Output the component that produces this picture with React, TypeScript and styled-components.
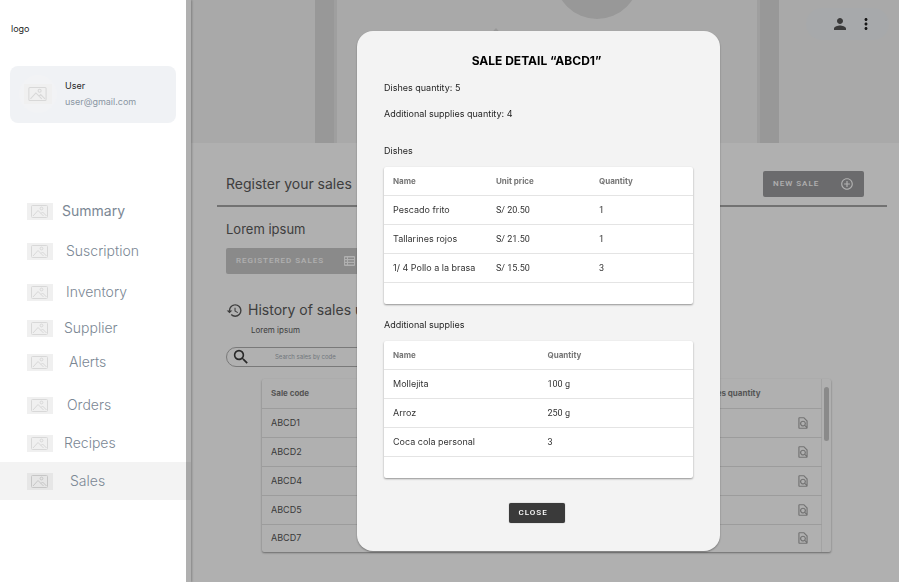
import React from "react";
import styled, { createGlobalStyle } from "styled-components";
import {
  MdPerson,
  MdMoreVert,
  MdAddCircleOutline,
  MdHistory,
  MdSearch,
  MdOutlineFindInPage,
} from "react-icons/md";

const GlobalStyle = createGlobalStyle`
  *, *::before, *::after { box-sizing: border-box; }
  body {
    margin: 0;
    background: #fff;
    color: #1f1f1f;
    font-family: Inter, "Liberation Sans", sans-serif;
    font-size: 9px;
    line-height: 12px;
  }
  h1, h2, h3, p { margin: 0; font-weight: 400; }
  button, input { font: inherit; }
  svg { display: block; flex: none; }
`;

const Page = styled.div`
  display: flex;
  min-height: 100vh;
`;

/* ---------- Sidebar ---------- */

const Sidebar = styled.aside`
  width: 191px;
  flex: none;
  background: #fff;
  box-shadow: 1px 0 2px rgba(0, 0, 0, 0.25);
  z-index: 1;
`;

const Logo = styled.p`
  padding: 23px 11px 0;
  height: 66px;
`;

const UserCard = styled.section`
  display: flex;
  align-items: center;
  gap: 8px;
  height: 57px;
  margin: 0 15px 0 10px;
  padding: 0 0 2px 9px;
  border-radius: 8px;
  background: #f0f2f5;
`;

const Avatar = styled.div`
  display: grid;
  place-items: center;
  width: 38px;
  height: 38px;
  border-radius: 50%;
  background: #f2f3f5;
`;

const UserEmail = styled.p`
  margin-top: 4px;
  color: #8a96a3;
`;

const UserName = styled.h2`
  font-size: 9px;
  line-height: 12px;
`;

const Nav = styled.nav`
  display: flex;
  flex-direction: column;
  padding-top: 69px;
`;

const NavLink = styled.a<{
  $gap: number;
  $height: number;
  $indent: number;
  $active?: boolean;
  $medium?: boolean;
}>`
  display: flex;
  align-items: center;
  gap: ${(p) => p.$indent}px;
  height: ${(p) => p.$height}px;
  margin-top: ${(p) => p.$gap}px;
  padding-left: 27px;
  background: ${(p) => (p.$active ? "#f3f3f3" : "transparent")};
  color: #7b8794;
  font-size: 14px;
  font-weight: ${(p) => (p.$medium ? 400 : 300)};
  line-height: 20px;
  text-decoration: none;
`;

const PictureSvg = styled.svg<{ $strong?: boolean }>`
  color: ${(p) => (p.$strong ? "#c6c6c6" : "#d8d8d8")};
  background: ${(p) => (p.$strong ? "#e6e6e6" : "#f0f0f0")};
`;

function Picture({ strong, width = 26, height = 17 }: { strong?: boolean; width?: number; height?: number }) {
  return (
    <PictureSvg $strong={strong} width={width} height={height} viewBox="0 0 26 17" fill="none" stroke="currentColor" aria-hidden="true">
      <rect x="4.5" y="2.5" width="16" height="12" rx="1" />
      <circle cx="14.5" cy="5.5" r="1.4" />
      <path d="M6 13l5-5.500 5.500 5.500M14 10.500l1.500-1.500 4 4" />
    </PictureSvg>
  );
}

const navItems = [
  { label: "Summary", gap: 0, height: 38, indent: 9, medium: true },
  { label: "Suscription", gap: 2, height: 38, indent: 13 },
  { label: "Inventory", gap: 4, height: 36, indent: 13 },
  { label: "Supplier", gap: 0, height: 36, indent: 11 },
  { label: "Alerts", gap: 0, height: 32, indent: 16 },
  { label: "Orders", gap: 8, height: 38, indent: 14 },
  { label: "Recipes", gap: 0, height: 38, indent: 11 },
  { label: "Sales", gap: 0, height: 38, indent: 17, active: true },
];

/* ---------- Main page ---------- */

const Main = styled.main`
  flex: 1;
  min-width: 0;
`;

const Banner = styled.header`
  display: grid;
  height: 143px;
  overflow: hidden;
  background: #f5f5f5;
  & > * { grid-area: 1 / 1; }
`;

const BannerArt = styled.svg`
  width: 100%;
  height: 143px;
`;

const AccountBar = styled.div`
  display: flex;
  align-items: center;
  justify-content: flex-end;
  justify-self: end;
  gap: 8px;
  width: 83px;
  height: 32px;
  margin: 8px 10px 0 0;
  padding-right: 14px;
  border-radius: 16px;
  background: #f2f5f8;
`;

const IconButton = styled.button<{ $color?: string }>`
  display: grid;
  place-items: center;
  padding: 0;
  border: 0;
  background: none;
  color: ${(p) => p.$color ?? "#555"};
`;

const TitleBar = styled.div`
  display: flex;
  align-items: center;
  justify-content: space-between;
  margin: 0 12px 0 26px;
  padding: 28px 23px 8px 9px;
  border-bottom: 2px solid #a6a6a6;
`;

const Title = styled.h1`
  color: #5a5a5a;
  font-size: 14px;
  line-height: 20px;
`;

const ActionButton = styled.button<{ $bg: string; $width: number }>`
  display: flex;
  align-items: center;
  justify-content: space-between;
  width: ${(p) => p.$width}px;
  height: 26px;
  padding: 0 10px;
  border: 0;
  border-radius: 2px;
  background: ${(p) => p.$bg};
  color: #fff;
  font-family: Roboto, sans-serif;
  font-size: 8px;
  font-weight: 500;
  letter-spacing: 1px;
`;

const Body = styled.div`
  padding: 12px 68px 30px 35px;
`;

const Subtitle = styled.h2`
  margin-bottom: 9px;
  color: #5a5a5a;
  font-size: 13px;
  line-height: 20px;
`;

const HistoryTitle = styled.h2`
  display: flex;
  align-items: center;
  gap: 5px;
  margin-top: 26px;
  color: #5a5a5a;
  font-size: 14px;
  line-height: 20px;
`;

const HistoryNote = styled.p`
  margin: 4px 0 11px 25px;
  color: #5a5a5a;
  font-size: 8px;
`;

const SearchBox = styled.label`
  display: flex;
  align-items: center;
  gap: 26px;
  width: 260px;
  height: 20px;
  padding-left: 6px;
  border: 1px solid #b0b0b0;
  border-radius: 10px;
  color: #3a3a3a;
`;

const SearchInput = styled.input`
  flex: 1;
  min-width: 0;
  padding: 0;
  border: 0;
  outline: 0;
  background: none;
  font-size: 6px;
  line-height: 12px;
  &::placeholder { color: #a5adb5; opacity: 1; }
`;

const SalesPanel = styled.div`
  display: flex;
  margin: 12px 0 0 36px;
  border-radius: 2px;
  box-shadow: 0 1px 2px rgba(0, 0, 0, 0.4);
`;

const SalesTable = styled.table`
  flex: 1;
  border-collapse: collapse;
  table-layout: fixed;
  border-right: 1px solid #ececec;
  color: #555;
  th, td {
    height: 29px;
    padding: 0 0 0 9px;
    border-bottom: 1px solid #e2e2e2;
    text-align: left;
  }
  tr:last-child td { height: 28px; border-bottom: 0; }
  th { color: #7c7c7c; font-size: 8px; font-weight: 700; }
  th:nth-child(2) { padding: 0; text-align: right; }
  th:last-child, td:last-child { width: 61px; padding: 0 0 0 35px; }
`;

const ScrollTrack = styled.div`
  width: 9px;
  padding: 8px 2px 0;
`;

const ScrollThumb = styled.div`
  height: 54px;
  border-radius: 3px;
  background: #c9c9c9;
`;

function SheetIcon() {
  return (
    <svg width="11" height="10" viewBox="0 0 11 10" aria-hidden="true">
      <path fill="currentColor" fillRule="evenodd" d="M1 0h9a1 1 0 0 1 1 1v8a1 1 0 0 1-1 1H1a1 1 0 0 1-1-1V1a1 1 0 0 1 1-1zM1 1.500v1.500h2V1.500zM4 1.500v1.500h6V1.500zM1 4.300v1.500h2V4.300zM4 4.300v1.500h6V4.300zM1 7v1.500h2V7zM4 7v1.500h6V7z" />
    </svg>
  );
}

const sales = ["ABCD1", "ABCD2", "ABCD4", "ABCD5", "ABCD7"];

/* ---------- Sale detail dialog ---------- */

const Scrim = styled.div`
  position: fixed;
  inset: 0 0 0 186px;
  z-index: 2;
  display: flex;
  align-items: center;
  justify-content: center;
  padding-right: 8px;
  background: rgba(0, 0, 0, 0.31);
`;

const Dialog = styled.section`
  display: flex;
  flex-direction: column;
  width: 363px;
  padding: 22px 27px 28px;
  border-radius: 16px;
  background: #f3f3f3;
  box-shadow: 0 1px 2px rgba(0, 0, 0, 0.35);
`;

const DialogTitle = styled.h2`
  margin-bottom: 13px;
  padding-right: 4px;
  color: #000;
  font-size: 12px;
  font-weight: 700;
  line-height: 16px;
  text-align: center;
`;

const Fact = styled.p`
  margin-bottom: 14px;
`;

const SectionTitle = styled.h3<{ $top: number }>`
  margin: ${(p) => p.$top}px 0 10px;
  font-size: 9px;
  line-height: 12px;
`;

const DetailTable = styled.table`
  width: 100%;
  border-collapse: collapse;
  table-layout: fixed;
  border-radius: 2px;
  background: #fff;
  box-shadow: 0 1px 2px rgba(0, 0, 0, 0.4);
  color: #333;
  th, td {
    height: 29px;
    padding: 0 0 0 9px;
    border-bottom: 1px solid #e4e4e4;
    text-align: left;
    white-space: nowrap;
  }
  th { height: 28px; color: #757575; font-size: 8px; font-weight: 700; }
  td + td { font-family: Roboto, sans-serif; }
  tfoot td { height: 22px; border-bottom: 0; }
`;

const CloseButton = styled.button`
  align-self: center;
  width: 56px;
  height: 20px;
  margin: 25px 4px 0 0;
  padding: 0 0 0 10px;
  border: 0;
  border-radius: 2px;
  background: #3a3a3a;
  box-shadow: 0 0 1px rgba(0, 0, 0, 0.5);
  color: #fff;
  font-family: Roboto, sans-serif;
  font-size: 8px;
  font-weight: 500;
  letter-spacing: 1px;
  text-align: left;
`;

function Details({ label, head, rows }: { label: string; head: string[]; rows: string[][] }) {
  return (
    <DetailTable aria-label={label}>
      <thead>
        <tr>{head.map((h) => <th key={h} scope="col">{h}</th>)}</tr>
      </thead>
      <tbody>
        {rows.map((row) => (
          <tr key={row[0]}>{row.map((cell, i) => <td key={i}>{cell}</td>)}</tr>
        ))}
      </tbody>
      <tfoot>
        <tr><td colSpan={head.length} /></tr>
      </tfoot>
    </DetailTable>
  );
}

export default function App() {
  return (
    <>
      <GlobalStyle />
      <Page>
        <Sidebar>
          <Logo>logo</Logo>
          <UserCard>
            <Avatar><Picture width={28} height={20} /></Avatar>
            <div>
              <UserName>User</UserName>
              <UserEmail>user@gmail.com</UserEmail>
            </div>
          </UserCard>
          <Nav aria-label="Main">
            {navItems.map((item) => (
              <NavLink
                key={item.label}
                href={`#${item.label.toLowerCase()}`}
                $gap={item.gap}
                $height={item.height}
                $indent={item.indent}
                $active={item.active}
                $medium={item.medium}
                aria-current={item.active ? "page" : undefined}
              >
                <Picture strong={item.active} />
                {item.label}
              </NavLink>
            ))}
          </Nav>
        </Sidebar>

        <Main>
          <Banner>
            <BannerArt viewBox="0 0 708 143" preserveAspectRatio="xMidYMid slice" aria-hidden="true">
              <path fill="#e6e6e6" d="M124 0h22v143h-22zM566 0h22v143h-22z" />
              <path fill="#dcdcdc" d="M124 0h19v143h-19zM569 0h19v143h-19z" />
              <circle cx="406" cy="-23" r="42" fill="#dcdcdc" />
              <path fill="#dcdcdc" d="M305 28l105 115H200z" />
            </BannerArt>
            <AccountBar>
              <IconButton aria-label="Account"><MdPerson size={18} /></IconButton>
              <IconButton aria-label="More options" $color="#222"><MdMoreVert size={18} /></IconButton>
            </AccountBar>
          </Banner>

          <TitleBar>
            <Title>Register your sales</Title>
            <ActionButton $bg="#9c9c9f" $width={101}>
              NEW SALE
              <MdAddCircleOutline size={14} />
            </ActionButton>
          </TitleBar>

          <Body>
            <Subtitle>Lorem ipsum</Subtitle>
            <ActionButton $bg="#c9c9c9" $width={139}>
              REGISTERED SALES
              <SheetIcon />
            </ActionButton>

            <HistoryTitle>
              <MdHistory size={17} />
              History of sales until today
            </HistoryTitle>
            <HistoryNote>Lorem ipsum</HistoryNote>

            <SearchBox>
              <MdSearch size={16} viewBox="2 2 20 20" stroke="currentColor" />
              <SearchInput type="search" aria-label="Search sales by code" placeholder="Search sales by code" />
            </SearchBox>

            <SalesPanel>
              <SalesTable>
                <thead>
                  <tr>
                    <th scope="col">Sale code</th>
                    <th scope="col">Additional supplies quantity</th>
                    <th aria-label="Actions" />
                  </tr>
                </thead>
                <tbody>
                  {sales.map((code) => (
                    <tr key={code}>
                      <td>{code}</td>
                      <td />
                      <td>
                        <IconButton $color="#a8a8a8" aria-label={`View ${code}`}>
                          <MdOutlineFindInPage size={14} />
                        </IconButton>
                      </td>
                    </tr>
                  ))}
                </tbody>
              </SalesTable>
              <ScrollTrack><ScrollThumb /></ScrollTrack>
            </SalesPanel>
          </Body>
        </Main>
      </Page>

      <Scrim>
        <Dialog role="dialog" aria-modal="true" aria-labelledby="sale-title">
          <DialogTitle id="sale-title">SALE DETAIL “ABCD1”</DialogTitle>
          <Fact>Dishes quantity: 5</Fact>
          <Fact>Additional supplies quantity: 4</Fact>

          <SectionTitle $top={11}>Dishes</SectionTitle>
          <Details
            label="Dishes"
            head={["Name", "Unit price", "Quantity"]}
            rows={[
              ["Pescado frito", "S/ 20.50", "1"],
              ["Tallarines rojos", "S/ 21.50", "1"],
              ["1/ 4 Pollo a la brasa", "S/ 15.50", "3"],
            ]}
          />

          <SectionTitle $top={15}>Additional supplies</SectionTitle>
          <Details
            label="Additional supplies"
            head={["Name", "Quantity"]}
            rows={[
              ["Mollejita", "100 g"],
              ["Arroz", "250 g"],
              ["Coca cola personal", "3"],
            ]}
          />

          <CloseButton>CLOSE</CloseButton>
        </Dialog>
      </Scrim>
    </>
  );
}
